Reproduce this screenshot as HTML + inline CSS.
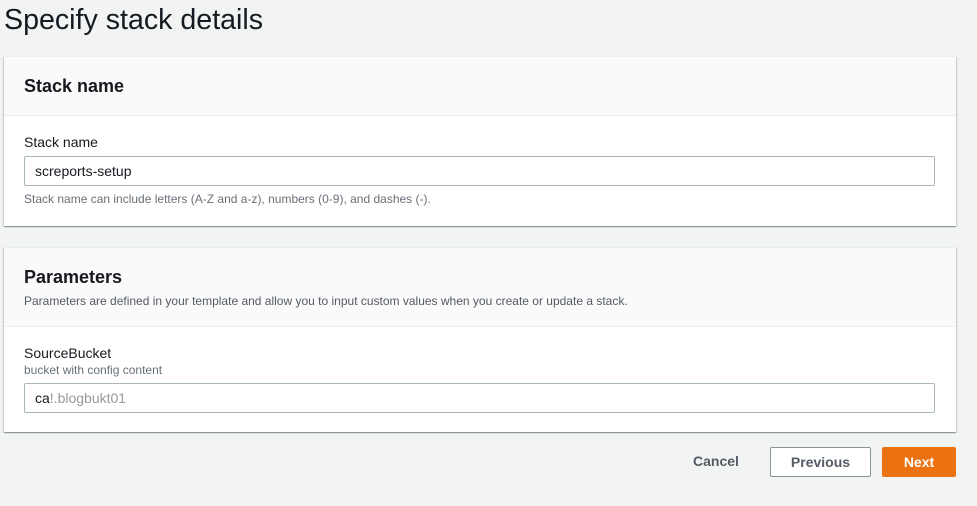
<!DOCTYPE html>
<html><head><style>
*{box-sizing:border-box;margin:0;padding:0}
body{width:977px;height:506px;background:#f2f3f3;font-family:"Liberation Sans",sans-serif;color:#16191f;position:relative;overflow:hidden}
h1{position:absolute;left:4px;top:4px;font-size:28.6px;font-weight:400;color:#16191f}
.card{position:absolute;left:4px;width:952px;background:#fff;box-shadow:0 1px 1px 0 rgba(0,28,36,.3),1px 1px 1px 0 rgba(0,28,36,.15),-1px 1px 1px 0 rgba(0,28,36,.15);border-top:1px solid #eaeded}
.hd{background:#fafafa;border-bottom:1px solid #eaeded;padding:0 20px}
.hd h2{font-size:18px;font-weight:700}
.lbl{position:absolute;left:20px;font-size:14px}
.inp{position:absolute;left:20px;width:911px;height:30px;border:1px solid #aab7b8;border-radius:2px;font-size:14px;padding:6px 10px;line-height:16px}
.desc{position:absolute;left:20px;font-size:12px;color:#687078}
.btn{position:absolute;top:447px;height:30px;font-size:14px;font-weight:700;text-align:center;line-height:28px;border-radius:2px}
</style></head><body>
<h1>Specify stack details</h1>
<div class="card" style="top:56px;height:170px">
 <div class="hd" style="height:59px;padding-top:19px"><h2>Stack name</h2></div>
 <div class="lbl" style="top:77px">Stack name</div>
 <div class="inp" style="top:99px">screports-setup</div>
 <div class="desc" style="top:135px">Stack name can include letters (A-Z and a-z), numbers (0-9), and dashes (-).</div>
</div>
<div class="card" style="top:247px;height:185px">
 <div class="hd" style="height:79px;padding-top:19px"><h2>Parameters</h2><div style="font-size:12px;color:#545b64;margin-top:6px">Parameters are defined in your template and allow you to input custom values when you create or update a stack.</div></div>
 <div class="lbl" style="top:97px">SourceBucket</div>
 <div class="desc" style="top:115px">bucket with config content</div>
 <div class="inp" style="top:135px;color:#16191f">ca<span style="color:#999">!.blogbukt01</span></div>
</div>
<div class="btn" style="left:686px;width:60px;color:#545b64">Cancel</div>
<div class="btn" style="left:770px;width:101px;border:1px solid #879596;background:#fff;color:#545b64">Previous</div>
<div class="btn" style="left:882px;width:74px;background:#ec7211;border:1px solid #ec7211;color:#fff">Next</div>
</body></html>
